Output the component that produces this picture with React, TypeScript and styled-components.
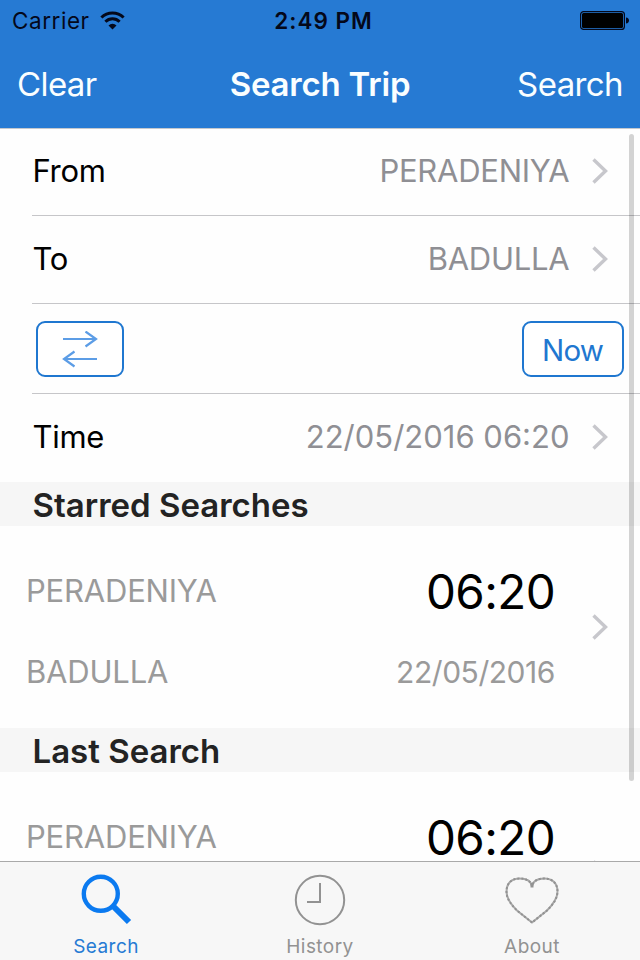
import React from "react";
import styled, { createGlobalStyle } from "styled-components";

const GlobalStyle = createGlobalStyle`
  * { box-sizing: border-box; }
  body { margin: 0; background: #fefefe; }
`;

const Screen = styled.div`
  position: relative;
  display: flex;
  flex-direction: column;
  width: 640px;
  height: 960px;
  overflow: hidden;
  background: #fefefe;
  color: #000;
  font-family: Inter, "Liberation Sans", sans-serif;
`;

const Header = styled.header`
  flex: none;
  height: 128px;
  background: #267ad3;
  box-shadow: 0 1px 0 #c3c8ce;
`;

const StatusBar = styled.div`
  display: grid;
  grid-template-columns: 1fr auto 1fr;
  align-items: center;
  height: 40px;
  padding: 0 11px 0 12px;
  color: #04081a;
  font-size: 22.5px;
  line-height: 40px;
`;

const Carrier = styled.div`
  display: flex;
  align-items: center;
  gap: 10px;
  padding-top: 1px;
  letter-spacing: 0.55px;

  svg {
    margin-top: -1px;
  }
`;

const Clock = styled.div`
  padding: 1px 0 0 6px;
  font-weight: 600;
  letter-spacing: 1px;
`;

const BatterySlot = styled.div`
  display: flex;
  justify-content: flex-end;
`;

const NavBar = styled.nav`
  display: grid;
  grid-template-columns: 1fr auto 1fr;
  align-items: center;
  height: 88px;
  padding: 0 17px 0 17px;
  color: #fafeff;
`;

const NavButton = styled.button<{ $end?: boolean }>`
  justify-self: ${(p) => (p.$end ? "end" : "start")};
  padding: 0;
  border: 0;
  background: none;
  color: inherit;
  font: 400 33px/40px Inter, sans-serif;
  letter-spacing: -0.6px;
`;

const NavTitle = styled.h1`
  margin: 0;
  font-size: 33px;
  font-weight: 600;
  line-height: 40px;
  letter-spacing: -0.2px;
`;

const Content = styled.main`
  flex: 1;
  min-height: 0;
  overflow: hidden;
`;

const Row = styled.div<{ $height?: number; $last?: boolean }>`
  display: flex;
  align-items: center;
  height: ${(p) => p.$height ?? 88}px;
  margin-left: 32px;
  padding: 0 31px 2px 0.5px;
  border-bottom: ${(p) => (p.$last ? "0" : "1px solid #c6c6c9")};
`;

const RowLabel = styled.span`
  flex: 1;
  font-size: 31px;
  line-height: 40px;
  letter-spacing: -0.3px;
`;

const RowValue = styled.span<{ $spacing?: number }>`
  margin-right: 21.5px;
  color: #8f8f94;
  font-size: 31px;
  line-height: 40px;
  letter-spacing: ${(p) => p.$spacing ?? -0.25}px;
`;

const ButtonRow = styled(Row)`
  justify-content: space-between;
  padding: 0 16px 0 4px;
`;

const OutlineButton = styled.button<{ $width: number }>`
  display: flex;
  align-items: center;
  justify-content: center;
  width: ${(p) => p.$width}px;
  height: 56px;
  padding: 2px 1px 0 0;
  border: 2px solid #1f77d0;
  border-radius: 9px;
  background: #fff;
  color: #1f77d0;
  font: 400 29.5px/40px Inter, sans-serif;
  letter-spacing: -0.9px;
`;

const SectionTitle = styled.h2`
  height: 44px;
  margin: 0;
  padding: 1px 0 0 32.5px;
  background: #f6f6f6;
  color: #232323;
  font-size: 33px;
  font-weight: 600;
  line-height: 44px;
  letter-spacing: 0;
`;

const TripCell = styled.article`
  display: flex;
  align-items: center;
  height: 202px;
  padding: 0 31px 0 26px;
`;

const TripLines = styled.div`
  flex: 1;
  display: flex;
  flex-direction: column;
  gap: 25px;
  margin-right: 36px;
  padding-top: 9px;
`;

const TripLine = styled.div`
  display: flex;
  align-items: center;
  justify-content: space-between;
  height: 56px;
`;

const Station = styled.span`
  color: #9a9a9a;
  font-size: 31px;
  line-height: 40px;
  letter-spacing: -0.2px;
`;

const TripTime = styled.span`
  padding-top: 1px;
  font-size: 47.5px;
  line-height: 56px;
  letter-spacing: -0.6px;
`;

const TripDate = styled.span`
  color: #9a9a9a;
  font-size: 30px;
  line-height: 40px;
  letter-spacing: -0.45px;
`;

const ScrollIndicator = styled.div`
  position: absolute;
  top: 134px;
  left: 629px;
  width: 5px;
  height: 647px;
  border-radius: 3px;
  background: rgba(0, 0, 0, 0.17);
`;

const TabBar = styled.footer`
  flex: none;
  display: grid;
  grid-template-columns: 212px 216px 208px;
  height: 99px;
  border-top: 1px solid #a9a9a9;
  background: #f7f7f7;
`;

const Tab = styled.div<{ $active?: boolean }>`
  display: flex;
  flex-direction: column;
  align-items: center;
  padding-top: 10px;
  color: ${(p) => (p.$active ? "#267bd4" : "#929292")};
  font-size: 19px;
  line-height: 24px;
  letter-spacing: 0.45px;

  svg {
    display: block;
    margin-bottom: 9px;
  }
`;

const Chevron = () => (
  <svg width="18" height="28" viewBox="0 0 18 28" fill="none">
    <path d="M2.500 2.500 14.500 14 2.500 25.500" stroke="#c7c7cc" strokeWidth="3.4" />
  </svg>
);

const WifiIcon = () => (
  <svg width="25" height="19" viewBox="0 0 25 19" fill="none" stroke="#04081a" strokeWidth="3">
    <path d="M1.400 6.500a15.700 15.700 0 0 1 22.200 0" />
    <path d="M5.400 10.700a10 10 0 0 1 14.200 0" />
    <path d="M12.500 18.500 8.500 14.400a5.800 5.800 0 0 1 8 0z" fill="#04081a" stroke="none" />
  </svg>
);

const BatteryIcon = () => (
  <svg width="49" height="19" viewBox="0 0 49 19">
    <rect x="0.600" y="0.600" width="43.800" height="17.800" rx="3" fill="none" stroke="#04081a" strokeWidth="1.2" />
    <rect x="2" y="2" width="41" height="15" rx="1.5" fill="#000" />
    <path d="M46 6.500c2 .3 3 1.400 3 3s-1 2.700-3 3z" fill="#04081a" />
  </svg>
);

const SwapIcon = () => (
  <svg width="36" height="38" viewBox="0 0 36 38" fill="none" stroke="#5c9de6" strokeWidth="2.2">
    <path d="M1 8H34M23.500 0.500 34 8 23.500 15.500" />
    <path d="M35 28H2M12.500 20.500 2 28 12.500 35.500" />
  </svg>
);

const SearchIcon = () => (
  <svg width="52" height="54" viewBox="0 0 52 54" fill="none" stroke="#0b7af0">
    <circle cx="20.800" cy="21.800" r="17" strokeWidth="4.400" />
    <path d="M33.500 34.500 49 50" strokeWidth="6" />
  </svg>
);

const HistoryIcon = () => (
  <svg width="52" height="54" viewBox="0 0 52 54" fill="none" stroke="#929292" strokeWidth="2">
    <circle cx="26" cy="28" r="24.200" />
    <path d="M26 11V30H13" />
  </svg>
);

const HEART_OUTLINE =
  "M27 50.500 12 38.500C5 31.500 1.500 26 1.500 19.500 1.500 11 7 6.500 14.500 6.500 21 6.500 26 9 27 14 28 9 33 6.500 39.500 6.500 47 6.500 52.500 11 52.500 19.500 52.500 26 49 31.500 42 38.500Z";

const HeartIcon = () => (
  <svg width="54" height="54" viewBox="0 0 54 54" fill="none" stroke="#929292" strokeWidth="2">
    <path d={HEART_OUTLINE} stroke="#a8a8a8" />
    <path d={HEART_OUTLINE} strokeDasharray="2 2" />
    <path d="M27 11V15.500" strokeWidth="3" />
  </svg>
);

const Trip = () => (
  <TripCell>
    <TripLines>
      <TripLine>
        <Station>PERADENIYA</Station>
        <TripTime>06:20</TripTime>
      </TripLine>
      <TripLine>
        <Station>BADULLA</Station>
        <TripDate>22/05/2016</TripDate>
      </TripLine>
    </TripLines>
    <Chevron />
  </TripCell>
);

export default function App() {
  return (
    <>
      <GlobalStyle />
      <Screen>
        <Header>
          <StatusBar>
            <Carrier>
              Carrier
              <WifiIcon />
            </Carrier>
            <Clock>2:49 PM</Clock>
            <BatterySlot>
              <BatteryIcon />
            </BatterySlot>
          </StatusBar>
          <NavBar>
            <NavButton>Clear</NavButton>
            <NavTitle>Search Trip</NavTitle>
            <NavButton $end>Search</NavButton>
          </NavBar>
        </Header>
        <Content>
          <Row>
            <RowLabel>From</RowLabel>
            <RowValue>PERADENIYA</RowValue>
            <Chevron />
          </Row>
          <Row>
            <RowLabel>To</RowLabel>
            <RowValue>BADULLA</RowValue>
            <Chevron />
          </Row>
          <ButtonRow $height={90}>
            <OutlineButton $width={88} aria-label="Swap stations">
              <SwapIcon />
            </OutlineButton>
            <OutlineButton $width={102}>Now</OutlineButton>
          </ButtonRow>
          <Row $last>
            <RowLabel>Time</RowLabel>
            <RowValue $spacing={0}>22/05/2016 06:20</RowValue>
            <Chevron />
          </Row>
          <SectionTitle>Starred Searches</SectionTitle>
          <Trip />
          <SectionTitle>Last Search</SectionTitle>
          <Trip />
        </Content>
        <TabBar>
          <Tab $active>
            <SearchIcon />
            Search
          </Tab>
          <Tab>
            <HistoryIcon />
            History
          </Tab>
          <Tab>
            <HeartIcon />
            About
          </Tab>
        </TabBar>
        <ScrollIndicator />
      </Screen>
    </>
  );
}
